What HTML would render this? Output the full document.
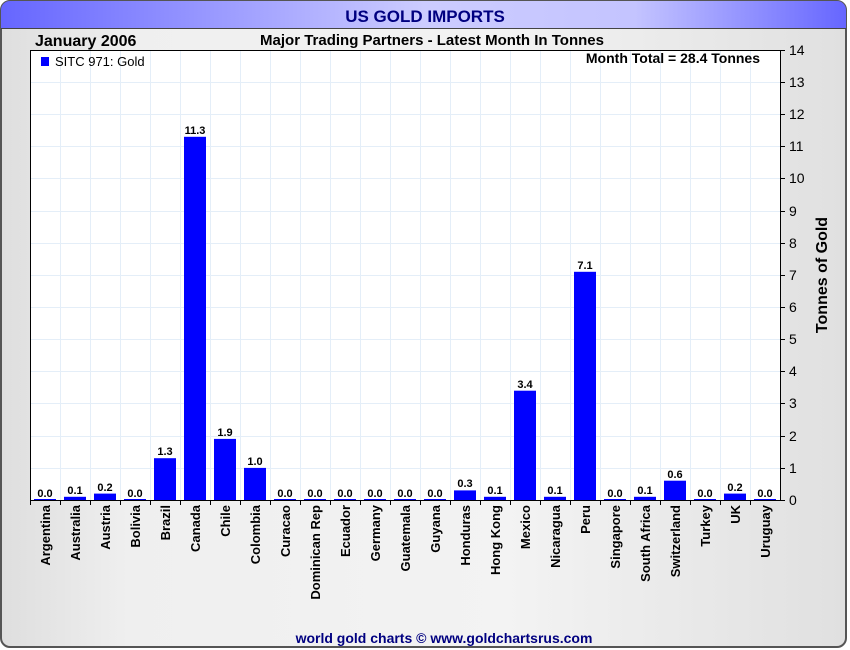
<!DOCTYPE html>
<html><head><meta charset="utf-8"><style>
html,body{margin:0;padding:0;width:850px;height:650px;overflow:hidden;background:#fff}
svg{display:block;font-family:"Liberation Sans",Arial,sans-serif}
</style></head><body>
<svg width="850" height="650" viewBox="0 0 850 650" xmlns="http://www.w3.org/2000/svg">
<defs>
<linearGradient id="bg" x1="0" y1="0" x2="1" y2="0"><stop offset="0" stop-color="#dedede"/><stop offset="0.15" stop-color="#efefef"/><stop offset="0.6" stop-color="#f3f3f3"/><stop offset="1" stop-color="#e0e0e0"/></linearGradient>
<linearGradient id="tb" x1="0" y1="0" x2="1" y2="0"><stop offset="0" stop-color="#6666ff"/><stop offset="0.5" stop-color="#ccccff"/><stop offset="0.75" stop-color="#c4c4ff"/><stop offset="1" stop-color="#6666ff"/></linearGradient>
</defs>
<rect x="1" y="1" width="845" height="646" rx="9" fill="url(#bg)" stroke="#555" stroke-width="2"/>
<path d="M1,28 V10 A9,9 0 0 1 10,1 H837 A9,9 0 0 1 846,10 V28 Z" fill="url(#tb)"/>
<line x1="1" y1="28.5" x2="846" y2="28.5" stroke="#444" stroke-width="1"/>
<text x="425" y="22" text-anchor="middle" font-size="17" font-weight="bold" fill="#000080">US GOLD IMPORTS</text>
<text x="35" y="46" font-size="16" font-weight="bold" fill="#000">January 2006</text>
<text x="432" y="45" text-anchor="middle" font-size="15" font-weight="bold" fill="#000">Major Trading Partners - Latest Month In Tonnes</text>
<rect x="30.5" y="50.5" width="750" height="450" fill="#fff" stroke="#000"/>
<g stroke="#e4eef8" stroke-width="1">
<path d="M60.5,51V500M90.5,51V500M120.5,51V500M150.5,51V500M180.5,51V500M210.5,51V500M240.5,51V500M270.5,51V500M300.5,51V500M330.5,51V500M360.5,51V500M390.5,51V500M420.5,51V500M450.5,51V500M480.5,51V500M510.5,51V500M540.5,51V500M570.5,51V500M600.5,51V500M630.5,51V500M660.5,51V500M690.5,51V500M720.5,51V500M750.5,51V500"/>
<path d="M31,82.5H780M31,114.5H780M31,146.5H780M31,178.5H780M31,211.5H780M31,243.5H780M31,275.5H780M31,307.5H780M31,339.5H780M31,371.5H780M31,403.5H780M31,436.5H780M31,468.5H780"/>
</g>
<rect x="41" y="57" width="8" height="9" fill="#0000ff"/>
<text x="55" y="66" font-size="13" fill="#000">SITC 971: Gold</text>
<text x="760" y="63" text-anchor="end" font-size="14" font-weight="bold" fill="#000">Month Total = 28.4 Tonnes</text>
<g fill="#0000ff">
<rect x="34" y="499" width="22" height="1"/>
<rect x="64" y="496.8" width="22" height="3.2"/>
<rect x="94" y="493.6" width="22" height="6.4"/>
<rect x="124" y="499" width="22" height="1"/>
<rect x="154" y="458.2" width="22" height="41.8"/>
<rect x="184" y="136.8" width="22" height="363.2"/>
<rect x="214" y="438.9" width="22" height="61.1"/>
<rect x="244" y="467.9" width="22" height="32.1"/>
<rect x="274" y="499" width="22" height="1"/>
<rect x="304" y="499" width="22" height="1"/>
<rect x="334" y="499" width="22" height="1"/>
<rect x="364" y="499" width="22" height="1"/>
<rect x="394" y="499" width="22" height="1"/>
<rect x="424" y="499" width="22" height="1"/>
<rect x="454" y="490.4" width="22" height="9.6"/>
<rect x="484" y="496.8" width="22" height="3.2"/>
<rect x="514" y="390.7" width="22" height="109.3"/>
<rect x="544" y="496.8" width="22" height="3.2"/>
<rect x="574" y="271.8" width="22" height="228.2"/>
<rect x="604" y="499" width="22" height="1"/>
<rect x="634" y="496.8" width="22" height="3.2"/>
<rect x="664" y="480.7" width="22" height="19.3"/>
<rect x="694" y="499" width="22" height="1"/>
<rect x="724" y="493.6" width="22" height="6.4"/>
<rect x="754" y="499" width="22" height="1"/>
</g>
<g font-size="11" font-weight="bold" fill="#000" text-anchor="middle">
<text x="45" y="497">0.0</text><text x="75" y="494">0.1</text><text x="105" y="491">0.2</text><text x="135" y="497">0.0</text>
<text x="165" y="455">1.3</text><text x="195" y="134">11.3</text><text x="225" y="436">1.9</text><text x="255" y="465">1.0</text>
<text x="285" y="497">0.0</text><text x="315" y="497">0.0</text><text x="345" y="497">0.0</text><text x="375" y="497">0.0</text>
<text x="405" y="497">0.0</text><text x="435" y="497">0.0</text><text x="465" y="487">0.3</text><text x="495" y="494">0.1</text>
<text x="525" y="388">3.4</text><text x="555" y="494">0.1</text><text x="585" y="269">7.1</text><text x="615" y="497">0.0</text>
<text x="645" y="494">0.1</text><text x="675" y="478">0.6</text><text x="705" y="497">0.0</text><text x="735" y="491">0.2</text><text x="765" y="497">0.0</text>
</g>
<g stroke="#000" stroke-width="1">
<path d="M30.5,500V505M60.5,500V505M90.5,500V505M120.5,500V505M150.5,500V505M180.5,500V505M210.5,500V505M240.5,500V505M270.5,500V505M300.5,500V505M330.5,500V505M360.5,500V505M390.5,500V505M420.5,500V505M450.5,500V505M480.5,500V505M510.5,500V505M540.5,500V505M570.5,500V505M600.5,500V505M630.5,500V505M660.5,500V505M690.5,500V505M720.5,500V505M750.5,500V505"/>
<path d="M780,50.5H785M780,82.5H785M780,114.5H785M780,146.5H785M780,178.5H785M780,211.5H785M780,243.5H785M780,275.5H785M780,307.5H785M780,339.5H785M780,371.5H785M780,403.5H785M780,436.5H785M780,468.5H785M780,500.5H785"/>
</g>
<g font-size="14" fill="#000">
<text x="789" y="55">14</text><text x="789" y="87">13</text><text x="789" y="119">12</text><text x="789" y="151">11</text>
<text x="789" y="183">10</text><text x="789" y="216">9</text><text x="789" y="248">8</text><text x="789" y="280">7</text>
<text x="789" y="312">6</text><text x="789" y="344">5</text><text x="789" y="376">4</text><text x="789" y="408">3</text>
<text x="789" y="441">2</text><text x="789" y="473">1</text><text x="789" y="505">0</text>
</g>
<text transform="translate(827,275) rotate(-90)" text-anchor="middle" font-size="16" font-weight="bold" fill="#000">Tonnes of Gold</text>
<g font-size="13" font-weight="bold" fill="#000" text-anchor="end">
<text transform="translate(50,505) rotate(-90)">Argentina</text>
<text transform="translate(80,505) rotate(-90)">Australia</text>
<text transform="translate(110,505) rotate(-90)">Austria</text>
<text transform="translate(140,505) rotate(-90)">Bolivia</text>
<text transform="translate(170,505) rotate(-90)">Brazil</text>
<text transform="translate(200,505) rotate(-90)">Canada</text>
<text transform="translate(230,505) rotate(-90)">Chile</text>
<text transform="translate(260,505) rotate(-90)">Colombia</text>
<text transform="translate(290,505) rotate(-90)">Curacao</text>
<text transform="translate(320,505) rotate(-90)">Dominican Rep</text>
<text transform="translate(350,505) rotate(-90)">Ecuador</text>
<text transform="translate(380,505) rotate(-90)">Germany</text>
<text transform="translate(410,505) rotate(-90)">Guatemala</text>
<text transform="translate(440,505) rotate(-90)">Guyana</text>
<text transform="translate(470,505) rotate(-90)">Honduras</text>
<text transform="translate(500,505) rotate(-90)">Hong Kong</text>
<text transform="translate(530,505) rotate(-90)">Mexico</text>
<text transform="translate(560,505) rotate(-90)">Nicaragua</text>
<text transform="translate(590,505) rotate(-90)">Peru</text>
<text transform="translate(620,505) rotate(-90)">Singapore</text>
<text transform="translate(650,505) rotate(-90)">South Africa</text>
<text transform="translate(680,505) rotate(-90)">Switzerland</text>
<text transform="translate(710,505) rotate(-90)">Turkey</text>
<text transform="translate(740,505) rotate(-90)">UK</text>
<text transform="translate(770,505) rotate(-90)">Uruguay</text>
</g>
<text x="444" y="643" text-anchor="middle" font-size="14" font-weight="bold" fill="#000080">world gold charts © www.goldchartsrus.com</text>
</svg>
</body></html>
